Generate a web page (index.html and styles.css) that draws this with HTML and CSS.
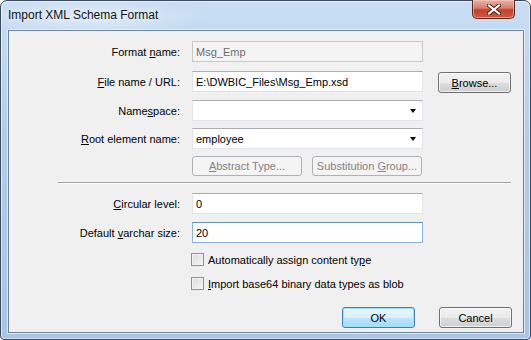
FILE: index.html
```html
<!DOCTYPE html>
<html lang="en">

<head>
    <meta charset="UTF-8">
    <title>Import XML Schema Format</title>
    <link rel="stylesheet" href="styles.css">
</head>

<body>
    <div class="window">
        <div class="titlebar">
            <span class="title">Import XML Schema Format</span>
            <div class="close-btn">
                <svg width="14" height="11" viewBox="0 0 14 11">
                    <path d="M2 1.5 L12 9.5 M12 1.5 L2 9.5" stroke="#4a1a14" stroke-width="4" stroke-linecap="square"/>
                    <path d="M2 1.5 L12 9.5 M12 1.5 L2 9.5" stroke="#ffffff" stroke-width="2.2" stroke-linecap="square"/>
                </svg>
            </div>
        </div>

        <div class="client">
            <div class="row first">
                <label class="lbl">Format <u>n</u>ame:</label>
                <input class="field" type="text" value="Msg_Emp" disabled>
            </div>

            <div class="row gap9">
                <label class="lbl"><u>F</u>ile name / URL:</label>
                <input class="field" type="text" value="E:\DWBIC_Files\Msg_Emp.xsd">
                <button class="btn browse"><u>B</u>rowse...</button>
            </div>

            <div class="row gap8">
                <label class="lbl">Name<u>s</u>pace:</label>
                <div class="field combo"><span></span><i class="arrow"></i></div>
            </div>

            <div class="row gap7">
                <label class="lbl"><u>R</u>oot element name:</label>
                <div class="field combo"><span>employee</span><i class="arrow"></i></div>
            </div>

            <div class="row gap7 type-buttons">
                <button class="btn" disabled><u>A</u>bstract Type...</button>
                <button class="btn" disabled>Substitution <u>G</u>roup...</button>
            </div>

            <div class="separator"></div>

            <div class="row gap9">
                <label class="lbl"><u>C</u>ircular level:</label>
                <input class="field" type="text" value="0">
            </div>

            <div class="row gap8">
                <label class="lbl">Default <u>v</u>archar size:</label>
                <input class="field focused" type="text" value="20">
            </div>

            <div class="check-row gap10">
                <span class="checkbox"></span>
                <span>Automatically assign content ty<u>p</u>e</span>
            </div>

            <div class="check-row gap11">
                <span class="checkbox"></span>
                <span><u>I</u>mport base64 binary data types as blob</span>
            </div>

            <div class="actions">
                <button class="btn default">OK</button>
                <button class="btn">Cancel</button>
            </div>
        </div>
    </div>
</body>

</html>
```

FILE: styles.css
```css
/* General Reset */
* {
    margin: 0;
    padding: 0;
    box-sizing: border-box;
}

body {
    width: 531px;
    height: 340px;
    overflow: hidden;
    font-family: 'Liberation Sans', Arial, sans-serif;
    font-size: 11px;
    color: #000;
    background: #fff;
}

u {
    text-decoration: underline;
    text-underline-offset: 1px;
}

/* Window frame */
.window {
    width: 531px;
    height: 340px;
    border: 1px solid #3b4a5a;
    border-radius: 7px 7px 4px 4px;
    background: linear-gradient(180deg, #c9def3 0%, #b2cdea 40%, #a7c5e6 100%);
    box-shadow: inset 0 0 0 1px rgba(255, 255, 255, 0.55);
    display: flex;
    flex-direction: column;
}

.titlebar {
    height: 29px;
    display: flex;
    align-items: flex-start;
    justify-content: space-between;
    padding-left: 7px;
    background: radial-gradient(ellipse 120px 18px at 90px 16px, rgba(255, 255, 255, 0.45), rgba(255, 255, 255, 0));
}

.title {
    font-size: 12px;
    margin-top: 7px;
    color: #111;
    text-shadow: 0 0 6px rgba(255, 255, 255, 0.9);
}

.close-btn {
    width: 43px;
    height: 19px;
    margin-right: 15px;
    margin-top: -1px;
    border: 1px solid #5c2a22;
    border-top: none;
    border-radius: 0 0 5px 5px;
    background: linear-gradient(180deg, #e7b3a8 0%, #d77e6c 45%, #c5412d 55%, #cf5c3f 100%);
    box-shadow: inset 0 0 0 1px rgba(255, 210, 200, 0.5);
    display: flex;
    align-items: center;
    justify-content: center;
}

/* Client area */
.client {
    margin: 0 6px 6px 7px;
    flex: 1;
    background: #f0f0f0;
    border: 1px solid #6d8399;
    box-shadow: 0 0 0 1px rgba(255, 255, 255, 0.6);
    padding-top: 10px;
}

.row {
    display: flex;
    align-items: center;
    height: 21px;
}

.gap7 { margin-top: 7px; }
.gap8 { margin-top: 8px; }
.gap9 { margin-top: 9px; }
.gap10 { margin-top: 10px; }
.gap11 { margin-top: 11px; }

.lbl {
    width: 177px;
    padding-right: 6px;
    text-align: right;
    flex-shrink: 0;
}

.field {
    width: 231px;
    height: 21px;
    margin-left: 6px;
    border: 1px solid #e2e3ea;
    border-top-color: #abadb3;
    background: #fff;
    font-family: inherit;
    font-size: 11px;
    color: #000;
    padding: 0 3px;
    outline: none;
}

.field:disabled {
    background: #f4f4f4;
    border-color: #c7c9cd;
    color: #6d6d6d;
}

.field.focused {
    border-color: #8ab4e0;
    border-top-color: #5d8fc4;
}

.combo {
    display: flex;
    align-items: center;
    justify-content: space-between;
    padding-right: 6px;
}

.arrow {
    width: 0;
    height: 0;
    border-left: 3.5px solid transparent;
    border-right: 3.5px solid transparent;
    border-top: 4px solid #000;
}

/* Buttons */
.btn {
    height: 21px;
    font-family: inherit;
    font-size: 11px;
    color: #000;
    border: 1px solid #707070;
    border-radius: 3px;
    background: linear-gradient(180deg, #f2f2f2 0%, #ebebeb 50%, #dddddd 51%, #cfcfcf 100%);
    box-shadow: inset 0 0 0 1px rgba(255, 255, 255, 0.7);
}

.btn:disabled {
    border-color: #adb2b5;
    background: #f4f4f4;
    color: #838383;
    box-shadow: none;
}

.browse {
    width: 73px;
    margin-left: 15px;
    margin-top: 2px;
}

.type-buttons {
    padding-left: 183px;
    height: 20px;
}

.type-buttons .btn {
    width: 110px;
    height: 20px;
}

.type-buttons .btn + .btn {
    margin-left: 10px;
}

.separator {
    margin: 6px 12px 0 49px;
    height: 2px;
    border-top: 1px solid #a0a0a0;
    border-bottom: 1px solid #ffffff;
}

/* Checkboxes */
.check-row {
    display: flex;
    align-items: center;
    gap: 4px;
    padding-left: 182px;
    height: 13px;
}

.checkbox {
    width: 13px;
    height: 13px;
    border: 1px solid #8e8f8f;
    background: linear-gradient(135deg, #dcdcdc, #f6f6f6);
    box-shadow: inset 0 0 0 1px #f4f4f4;
}

/* Dialog buttons */
.actions {
    display: flex;
    justify-content: flex-end;
    gap: 24px;
    padding-right: 11px;
    margin-top: 17px;
}

.actions .btn {
    width: 73px;
}

.btn.default {
    border-color: #3c7fb1;
    background: linear-gradient(180deg, #eaf6fd 0%, #d9f0fc 50%, #bee6fd 51%, #a7d9f5 100%);
    box-shadow: inset 0 0 0 1px #9ee4fc;
}
```
